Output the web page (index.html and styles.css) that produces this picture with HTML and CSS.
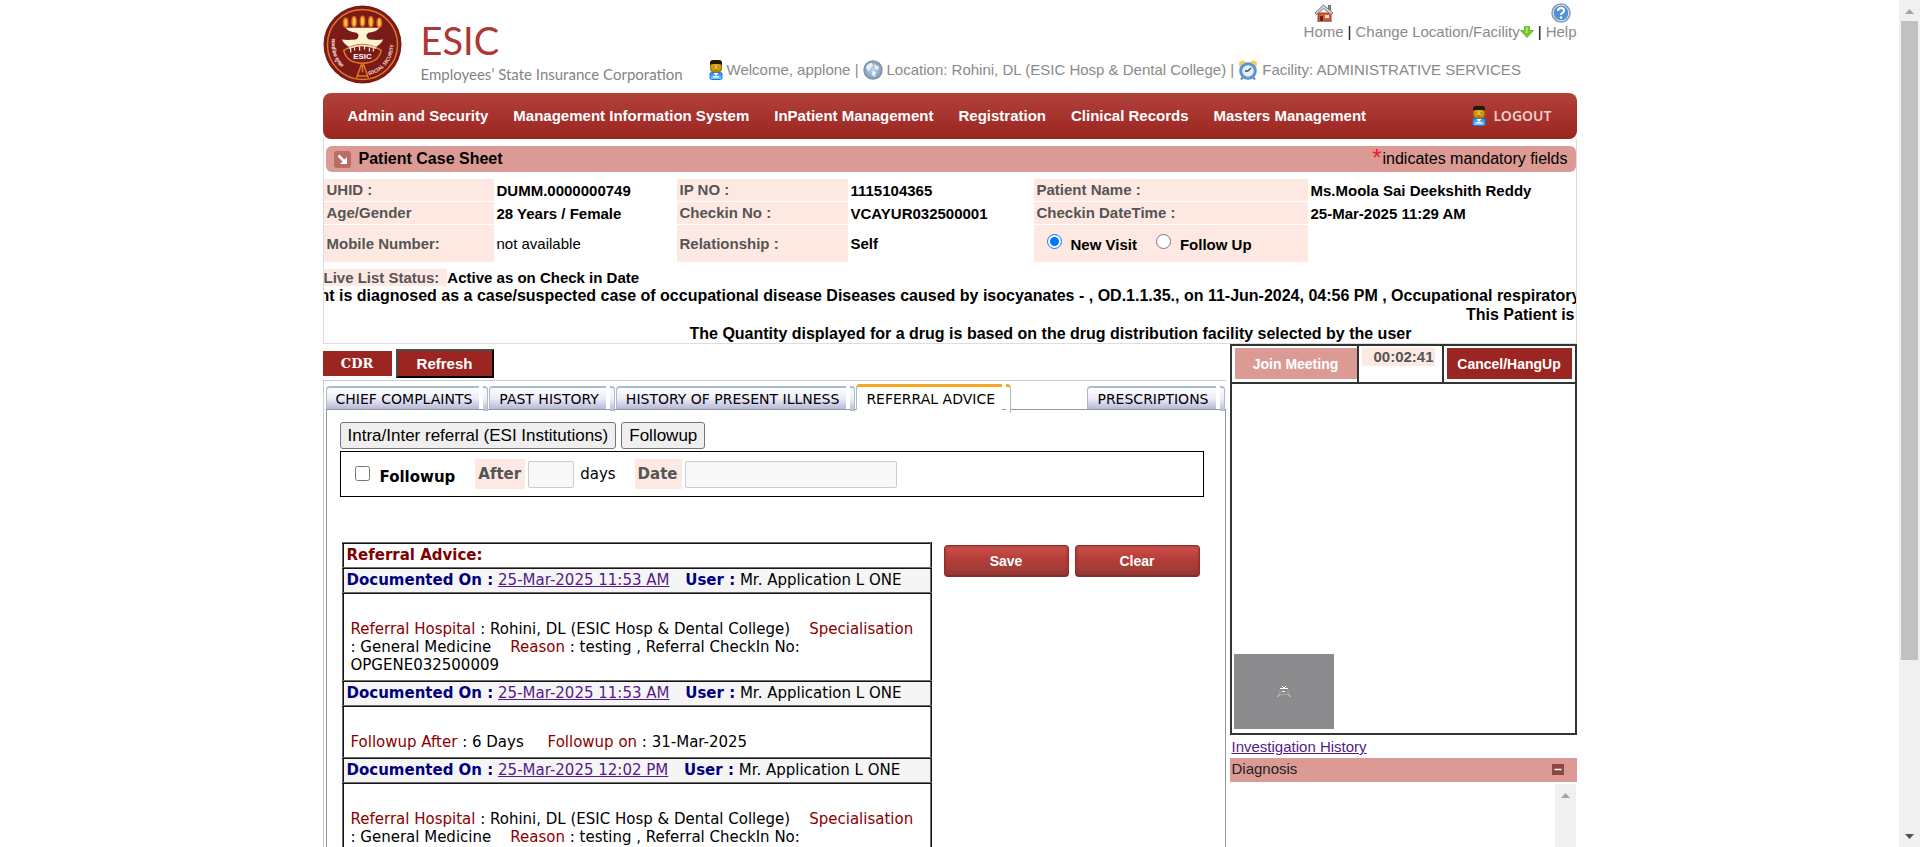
FILE: index.html
```
<!DOCTYPE html>
<html lang="en">
<head>
<meta charset="utf-8">
<title>Patient Case Sheet</title>
<link rel="stylesheet" href="styles.css">
</head>
<body>
<svg class="defs" aria-hidden="true">
  <defs>
    <linearGradient id="shirt" x1="0" y1="0" x2="0" y2="1"><stop offset="0" stop-color="#1c86ee"/><stop offset="1" stop-color="#8fd2ff"/></linearGradient>
    <radialGradient id="face"><stop offset="0" stop-color="#f3c73a"/><stop offset="1" stop-color="#bd8508"/></radialGradient>
    <radialGradient id="globe"><stop offset="0" stop-color="#c6d4e6"/><stop offset="1" stop-color="#7f9cc2"/></radialGradient>
    <symbol id="user" viewBox="0 0 14 20">
      <rect x="1" y="12.500" width="12" height="7" rx="1.500" fill="url(#shirt)" stroke="#1479e0"/>
      <path d="M4.500 13l2.500 3 2.500-3z" fill="#fff"/><rect x="4" y="16" width="6" height="1.500" fill="#e6f5ff"/>
      <rect x="1.500" y="2" width="11" height="10" rx="3" fill="url(#face)" stroke="#a87404"/>
      <path d="M1 5V3q0-3 3-3h6q3 0 3 3v2l-2-1H3z" fill="#241802"/>
      <path d="M4 7h1.500M8.500 7H10M5.500 10h3" stroke="#7d5300" stroke-width=".8"/>
    </symbol>
  </defs>
</svg>
<div class="window">
<div class="viewport">
<div class="page">
  <header class="header">
    <svg class="logo" viewBox="0 0 80 80" role="img" aria-label="ESIC emblem">
      <circle cx="40" cy="40" r="39.500" fill="#7c1a18"/>
      <circle cx="40" cy="40" r="35.500" fill="none" stroke="#dd7a26" stroke-width="1.500"/>
      <g fill="#f7d23c" stroke="#e2661c" stroke-width="1.500">
        <ellipse cx="23" cy="18" rx="2.200" ry="4.500"/><ellipse cx="31.500" cy="17" rx="2.200" ry="5"/><ellipse cx="40" cy="16.500" rx="2.200" ry="5"/><ellipse cx="48.500" cy="17" rx="2.200" ry="5"/><ellipse cx="57" cy="18" rx="2.200" ry="4.500"/>
      </g>
      <path d="M23 23h34q-2 4-11 5l-2 2q0 4 3 5 8 1 14 0-3 6-9 8-12-5-24 0-6-2-9-8 6 1 14 0 3-1 3-5l-2-2q-9-1-11-5z" fill="#fbf3d2"/>
      <path d="M21 46q19-12 38 0-3 13-19 13T21 46z" fill="#7c1a18" stroke="#dd7a26" stroke-width="1.500"/>
      <path d="M26 44q14-6 28 0M28 44v4M32 43v3M37 42v4M42 42v3M47 43v4M51 44v3" stroke="#f5e6d8" stroke-width="1.300" fill="none"/>
      <text x="40" y="55" text-anchor="middle" class="logo-word">ESIC</text>
      <path d="M39 60l-5 14M41 60l5 14M40 60v8M35 72h10" stroke="#dd7a26" stroke-width="1.500" fill="none"/>
      <path id="arcR" d="M46 71A32 32 0 0 0 71 34" fill="none"/>
      <path id="arcL" d="M9 34A32 32 0 0 0 34 71" fill="none"/>
      <text class="logo-ring"><textPath href="#arcR">SOCIAL SECURITY</textPath></text>
      <text class="logo-ring"><textPath href="#arcL">सामाजिक सुरक्षा</textPath></text>
    </svg>
    <div class="brand">
      <h1 class="brand-name">ESIC</h1>
      <p class="brand-sub">Employees’ State Insurance Corporation</p>
    </div>
    <div class="header-info">
      <nav class="quick" aria-label="Quick links">
        <a class="quick-link" href="#">
          <svg class="icon20" viewBox="0 0 20 20"><path d="M4 10h13v8H4z" fill="#e0553a" stroke="#a33a28"/><path d="M14 2h3v5h-3z" fill="#777"/><path d="M1 10l8.500-8 9.500 8-2 1.500-7.500-6-7 6z" fill="#d4d4d4" stroke="#777"/><path d="M6 13h3v5H6z" fill="#6d2417"/><path d="M11 12h4v3h-4z" fill="#ffe9c9"/><path d="M3 18.500h15" stroke="#8b8b8b"/></svg>
          Home</a>
        <span class="bar">|</span>
        <a class="quick-link quick-inline" href="#">Change Location/Facility<svg class="icon14" viewBox="0 0 14 14"><path d="M4.500 1.500h5v4h4L7 12.500 .500 5.500h4z" fill="#74c92c" stroke="#6cb833"/><path d="M6 2h1.500v6H6z" fill="#b6ec7c"/></svg></a>
        <span class="bar">|</span>
        <a class="quick-link" href="#">
          <svg class="icon20" viewBox="0 0 20 20"><circle cx="10" cy="10" r="9" fill="#4f92d8" stroke="#8a9cb0" stroke-width="1.500"/><circle cx="10" cy="10" r="7.800" fill="none" stroke="#dceaf8"/><path d="M7 8q0-3 3-3t3 2.500q0 1.500-1.500 2.300T10 12" stroke="#fff" stroke-width="2" fill="none"/><circle cx="10" cy="14.500" r="1.200" fill="#fff"/></svg>
          Help</a>
      </nav>
      <div class="userbar">
        <svg class="icon-user"><use href="#user"/></svg><span>Welcome, applone |</span>
        <svg class="icon20" viewBox="0 0 20 20"><circle cx="10" cy="10" r="9" fill="url(#globe)" stroke="#8493a8" stroke-width="1.500"/><path d="M3 7q2-4 6-4l1 3-3 3-2 3zM11 4l5 3-1 3-3-1zM9 11l4 1-1 5-3-2z" fill="#e7eff8"/></svg><span>Location: Rohini, DL (ESIC Hosp &amp; Dental College) |</span>
        <svg class="icon20" viewBox="0 0 20 20"><circle cx="4.500" cy="4" r="3.500" fill="#f3cf62"/><circle cx="15.500" cy="4" r="3.500" fill="#f3cf62"/><path d="M5 17l-2 2.500M15 17l2 2.500" stroke="#7a8a5a" stroke-width="2"/><circle cx="10" cy="11" r="7.300" fill="#e6f0fa" stroke="#5b95d6" stroke-width="3"/><path d="M10 11l3-3M10 11H7" stroke="#345" stroke-width="1.300"/></svg><span>Facility: ADMINISTRATIVE SERVICES</span>
      </div>
    </div>
  </header>

  <nav class="menu" aria-label="Main menu">
    <a href="#">Admin and Security</a><a href="#">Management Information System</a><a href="#">InPatient Management</a><a href="#">Registration</a><a href="#">Clinical Records</a><a href="#">Masters Management</a>
    <a class="logout" href="#"><svg class="icon-user"><use href="#user"/></svg>LOGOUT</a>
  </nav>

  <section class="case">
    <div class="titlebar">
      <svg class="title-icon" viewBox="0 0 17 17"><rect width="17" height="17" rx="3" fill="#bd6b67"/><path d="M4.500 4.500l6 6" stroke="#fff" stroke-width="2.500"/><path d="M13 6v7H6z" fill="#fff"/></svg>
      <h2>Patient Case Sheet</h2>
      <span class="mandatory"><span class="star">*</span>indicates mandatory fields</span>
    </div>
    <dl class="facts">
      <dt>UHID :</dt><dd>DUMM.0000000749</dd><dt>IP NO :</dt><dd>1115104365</dd><dt>Patient Name :</dt><dd>Ms.Moola Sai Deekshith Reddy</dd>
      <dt>Age/Gender</dt><dd>28 Years / Female</dd><dt>Checkin No :</dt><dd>VCAYUR032500001</dd><dt>Checkin DateTime :</dt><dd>25-Mar-2025 11:29 AM</dd>
      <dt class="tall">Mobile Number:</dt><dd class="plain">not available</dd><dt class="tall">Relationship :</dt><dd>Self</dd>
      <dt class="tall visit"><label><input type="radio" name="visit" checked>New Visit</label><label><input type="radio" name="visit">Follow Up</label></dt><dd></dd>
    </dl>
    <p class="live"><span class="live-label">Live List Status:</span>Active as on Check in Date</p>
    <p class="ticker ticker-cut">nt is diagnosed as a case/suspected case of occupational disease Diseases caused by isocyanates - , OD.1.1.35., on 11-Jun-2024, 04:56 PM , Occupational respiratory</p>
    <p class="ticker ticker-end">This Patient is</p>
    <p class="ticker ticker-note">The Quantity displayed for a drug is based on the drug distribution facility selected by the user</p>
  </section>

  <div class="columns">
    <main class="work">
      <div class="actions"><button class="cdr" type="button">CDR</button><button class="refresh" type="button">Refresh</button></div>
      <div class="frame">
        <div class="tabs" role="tablist">
          <button class="tab" role="tab" type="button">CHIEF COMPLAINTS</button><button class="tab" role="tab" type="button">PAST HISTORY</button><button class="tab" role="tab" type="button">HISTORY OF PRESENT ILLNESS</button><button class="tab active" role="tab" type="button" aria-selected="true">REFERRAL ADVICE</button><button class="tab last" role="tab" type="button">PRESCRIPTIONS</button>
        </div>
        <div class="panel">
          <div class="modes"><button type="button">Intra/Inter referral (ESI Institutions)</button><button type="button">Followup</button></div>
          <div class="follow">
            <label class="follow-check"><input type="checkbox">Followup</label>
            <label class="hint" for="after">After</label><input class="field after" id="after" type="text" disabled><span class="days">days</span>
            <label class="hint" for="date">Date</label><input class="field date" id="date" type="text" disabled>
          </div>
          <div class="record">
            <table class="advice">
              <thead><tr><th>Referral Advice:</th></tr></thead>
              <tbody>
                <tr class="doc"><td><b>Documented On :</b> <a href="#">25-Mar-2025 11:53 AM</a> <b class="by">User :</b> Mr. Application L ONE</td></tr>
                <tr class="detail"><td><i>Referral Hospital</i> : Rohini, DL (ESIC Hosp &amp; Dental College) &nbsp;&nbsp; <i>Specialisation</i> : General Medicine &nbsp;&nbsp; <i>Reason</i> : testing , Referral CheckIn No: OPGENE032500009</td></tr>
                <tr class="doc"><td><b>Documented On :</b> <a href="#">25-Mar-2025 11:53 AM</a> <b class="by">User :</b> Mr. Application L ONE</td></tr>
                <tr class="detail"><td><i>Followup After</i> : 6 Days &nbsp;&nbsp;&nbsp; <i>Followup on</i> : 31-Mar-2025</td></tr>
                <tr class="doc"><td><b>Documented On :</b> <a href="#">25-Mar-2025 12:02 PM</a> <b class="by">User :</b> Mr. Application L ONE</td></tr>
                <tr class="detail"><td><i>Referral Hospital</i> : Rohini, DL (ESIC Hosp &amp; Dental College) &nbsp;&nbsp; <i>Specialisation</i> : General Medicine &nbsp;&nbsp; <i>Reason</i> : testing , Referral CheckIn No:</td></tr>
              </tbody>
            </table>
            <div class="save"><button type="button">Save</button><button type="button">Clear</button></div>
          </div>
        </div>
      </div>
    </main>
    <aside class="side">
      <div class="call">
        <div class="call-bar">
          <div class="call-cell grow"><button class="join" type="button">Join Meeting</button></div>
          <div class="call-cell timer"><span>00:02:41</span></div>
          <div class="call-cell end"><button class="hang" type="button">Cancel/HangUp</button></div>
        </div>
        <div class="video">
          <div class="preview"><svg viewBox="0 0 14 12"><path d="M5 .500h1M8 .500h1M6 1.500h2M3 2.500h8M5 5.500h3" stroke="#fff"/><path d="M3 4.500v4h8v-4" stroke="#a8a8a8" fill="none"/><path d="M2.500 8l-2 3M11.500 8l2 3" stroke="#ddd"/></svg></div>
        </div>
      </div>
      <a class="history" href="#">Investigation History</a>
      <div class="diag"><span>Diagnosis</span><button type="button" aria-label="Collapse"><svg viewBox="0 0 12 11"><path d="M2.500 5.500h7" stroke="#fff" stroke-width="1.500"/></svg></button></div>
      <div class="diag-body"><div class="mini-scroll"><svg viewBox="0 0 9 5"><path d="M0 5l4.500-5L9 5z" fill="#a3a3a3"/></svg></div></div>
    </aside>
  </div>
</div>
</div>
<div class="scrollbar" aria-hidden="true">
  <svg viewBox="0 0 9 5"><path d="M0 5l4.500-5L9 5z" fill="#a3a3a3"/></svg>
  <div class="thumb"></div>
  <svg viewBox="0 0 9 5"><path d="M0 0l4.500 5L9 0z" fill="#505050"/></svg>
</div>
</div>
</body>
</html>
```
FILE: styles.css
```
* { box-sizing: border-box; }
body { margin: 0; background: #fff; color: #000; font: 15px/18px "Liberation Sans", Arial, sans-serif; }
h1, h2, p, dl, dd { margin: 0; }
button { font-family: inherit; cursor: pointer; }
svg { flex: none; }
.defs { position: absolute; width: 0; height: 0; }
.window { display: flex; height: 100vh; overflow: hidden; }
.viewport { flex: 1; overflow: hidden; }
.page { width: 100%; max-width: 1254px; margin: 0 auto; }

/* Page scrollbar */
.scrollbar { width: 21px; background: #f0f0f0; display: flex; flex-direction: column; align-items: center; padding: 9px 2px 8px; }
.scrollbar svg { width: 9px; height: 5px; }
.thumb { width: 100%; height: 77%; margin: 7px 0 auto; background: #c1c1c1; }

/* Header */
.header { display: flex; height: 93px; }
.logo { width: 79px; height: 79px; margin: 5px 19px 0 0; }
.logo-word { font: bold 8px "Liberation Sans", Arial, sans-serif; fill: #fff; }
.logo-ring { font: bold 5px "Noto Sans", sans-serif; fill: #f3dcc8; }
.brand { width: 268px; padding-top: 17px; white-space: nowrap; }
.brand-name { font: 400 38px/46px Lato, "Open Sans", sans-serif; color: #ae3634; }
.brand-sub { font: 15px/22px Lato, "Open Sans", sans-serif; color: #7f8487; }
.header-info { flex: 1; display: flex; flex-direction: column; color: #8a8a8a; white-space: nowrap; }
.quick { display: flex; justify-content: flex-end; align-items: flex-end; gap: 4px; margin-top: 3px; }
.quick-link { display: flex; flex-direction: column; align-items: center; color: #8a8a8a; text-decoration: none; }
.quick-inline { flex-direction: row; }
.quick .bar { color: #000; }
.icon20 { width: 20px; height: 20px; }
.icon14 { width: 14px; height: 14px; }
.icon-user { width: 14px; height: 20px; }
.userbar { display: flex; align-items: center; gap: 4px; margin: 19px 0 0 20px; }

/* Main menu */
.menu { display: flex; align-items: center; gap: 25px; min-height: 46px; padding: 0 25px; border-radius: 8px; background: linear-gradient(#b2413c, #9b2420); white-space: nowrap; }
.menu a { color: #fff; font-weight: bold; text-decoration: none; }
.menu .logout { display: flex; align-items: center; gap: 8px; margin-left: auto; font: 600 14px/20px "Noto Sans", "Open Sans", sans-serif; color: #edcfcd; }

/* Patient summary */
.case { border: 1px solid #ddd; border-top: 0; padding-top: 7px; }
.titlebar { display: flex; align-items: center; height: 26px; margin-left: 2px; padding: 0 8px; border-radius: 6px; background: #dc9a94; }
.title-icon { width: 17px; height: 17px; }
.titlebar h2 { font-size: 16px; margin-left: 8px; }
.mandatory { margin-left: auto; font-size: 16px; }
.star { color: #e3261f; font-size: 24px; line-height: 10px; vertical-align: -2px; margin-right: 1px; }
.facts { display: grid; grid-template-columns: 170px 183px 171px 186px 274px 1fr; row-gap: 1px; margin-top: 7px; }
.facts dt { background: #fde9e2; color: #555; font-weight: bold; padding: 2px 3px; min-height: 22px; }
.facts dd { font-weight: bold; padding: 3px 3px 0; }
.facts .tall { min-height: 37px; padding-top: 10px; }
.facts .tall + dd { padding-top: 10px; }
.facts .plain { font-weight: normal; }
.facts .visit { display: flex; align-items: flex-start; gap: 19px; color: #000; padding: 9px 13px 0; }
.visit label { display: flex; align-items: center; }
.visit input { width: 15px; height: 15px; margin: 0 9px 6px 0; }
.live { margin-top: 7px; font-weight: bold; line-height: 17px; }
.live-label { display: inline-block; background: #fde9e2; color: #555; padding-right: 8px; }
.ticker { overflow: hidden; white-space: nowrap; font-weight: bold; font-size: 16px; line-height: 19px; }
.ticker-cut { text-indent: -4px; }
.ticker-end { text-align: right; padding-right: 1px; }
.ticker-note { padding-left: 366px; }

/* Work area */
.columns { display: flex; align-items: flex-start; }
.work { flex: 1; min-width: 0; }
.actions { display: flex; align-items: center; gap: 4px; height: 36px; padding-top: 2px; }
.cdr { width: 69px; height: 25px; border: 0; background: #9b2520; color: #fff; font: bold 13px "DejaVu Serif", serif; }
.refresh { width: 98px; height: 29px; padding: 0; border: 2px solid; border-color: #4c4c4c #000 #000 #4c4c4c; background: #9b2520; color: #fff; font-size: 15px; font-weight: bold; }
.frame { border: 1px solid #ccc; border-width: 1px 0 0 1px; padding: 3px 0 0 2px; margin-right: 4px; }
.tabs { display: flex; align-items: flex-end; }
.tab { position: relative; height: 23px; margin-right: 10px; padding: 0 7px 0 9px; border: 0; border-top: 2px solid #a9bccb; border-left: 1px solid #a9bccb; border-radius: 4px 0 0 0; background: linear-gradient(#fff, #ecebf7 50%, #b9b8da); font: 14px/20px "DejaVu Sans", Verdana, sans-serif; white-space: nowrap; }
.tab::after { content: ""; position: absolute; top: -2px; right: -9px; width: 4px; height: 23px; border-top: 2px solid #a9bccb; border-right: 1px solid #a9bccb; border-radius: 0 4px 0 0; background: inherit; }
.tab.active { height: 26px; border-top: 3px solid #f5a623; background: #fff; margin-bottom: -1px; }
.tab.active::after { height: 26px; top: -3px; border-top: 3px solid #f5a623; }
.tab.last { margin-left: auto; }
.panel { border: 1px solid #8d9a9a; border-bottom: 0; padding: 12px 21px 0 13px; min-height: 440px; }
.modes { display: flex; gap: 5px; }
.modes button { height: 27px; padding: 0 7px; border: 1px solid #767676; border-radius: 3px; background: #efefef; font-size: 17px; line-height: 20px; }
.follow { display: flex; align-items: center; height: 46px; margin-top: 2px; border: 1px solid #000; padding-left: 14px; font: 15px/18px "DejaVu Sans", Verdana, sans-serif; }
.follow-check { display: flex; align-items: center; font-weight: bold; padding-top: 5px; margin-right: 20px; }
.follow-check input { width: 15px; height: 15px; margin: 0 10px 6px 0; }
.hint { background: #fde9e2; color: #555; font-weight: bold; line-height: 30px; padding: 0 4px 0 3px; }
.field { height: 27px; margin-left: 3px; border: 1px solid #ccc; border-radius: 2px; background: #f8f8f8; }
.after { width: 46px; }
.date { width: 212px; }
.days { margin: 0 19px 0 6px; }
.record { display: flex; align-items: flex-start; gap: 12px; margin: 45px 0 0 2px; font: 15px/18px "DejaVu Sans", Verdana, sans-serif; }
.advice { flex: 1; border-collapse: collapse; color: #000; }
.advice th, .advice td { border: 2px ridge #6b6b6b; text-align: left; padding: 2px 3px; }
.advice th { color: #800000; line-height: 19px; }
.doc td { background: #f5f5f5; line-height: 19px; }
.doc b { color: #000080; }
.doc .by { margin-left: 11px; }
.doc a, .history { color: #551a8b; }
.detail td { padding: 26px 7px 6px; }
.detail i { font-style: normal; color: #8b0000; }
.save { display: flex; gap: 6px; padding: 3px 4px 0 0; }
.save button { width: 125px; height: 32px; border: 1px solid #8e2f2b; border-bottom: 2px solid #83302c; border-radius: 4px; background: linear-gradient(#cf514d, #b53d38 45%, #963c37); color: #fff; font: bold 14px "Liberation Sans", Arial, sans-serif; box-shadow: inset 0 0 3px #8e2f2b; }

/* Right column */
.side { width: 347px; }
.call { border: 2px solid #333; }
.call-bar { display: flex; height: 38px; border-bottom: 2px solid #333; }
.call-cell { padding: 2px 3px 3px; border-right: 2px solid #333; }
.call-cell.grow { flex: 1; padding-right: 0; }
.call-cell.end { border-right: 0; }
.join, .hang { display: block; height: 31px; border: 0; color: #fff; font-size: 14px; font-weight: bold; }
.join { width: 100%; background: #dc9a94; }
.hang { width: 125px; background: #9b2520; padding: 0; }
.timer { width: 85px; }
.timer span { display: block; background: #fde9e2; color: #555; font-weight: bold; padding-left: 12px; width: 73px; }
.video { height: 349px; display: flex; align-items: flex-end; padding: 2px; }
.preview { display: grid; place-items: center; width: 100px; height: 75px; margin-bottom: 2px; background: #8b8b8d; }
.preview svg { width: 14px; height: 12px; }
.history { display: block; padding: 2px; line-height: 19px; }
.diag { display: flex; align-items: flex-start; justify-content: space-between; height: 24px; padding: 2px 13px 0 2px; background: #dc9a94; color: #222; }
.diag button { width: 12px; height: 11px; margin-top: 4px; padding: 0; border: 0; background: #8e4642; line-height: 0; }
.diag-body { display: flex; justify-content: flex-end; height: 120px; padding: 2px 1px 0 0; }
.mini-scroll { width: 21px; background: #f0f0f0; text-align: center; padding-top: 9px; line-height: 0; }
.mini-scroll svg { width: 9px; height: 5px; }
```
